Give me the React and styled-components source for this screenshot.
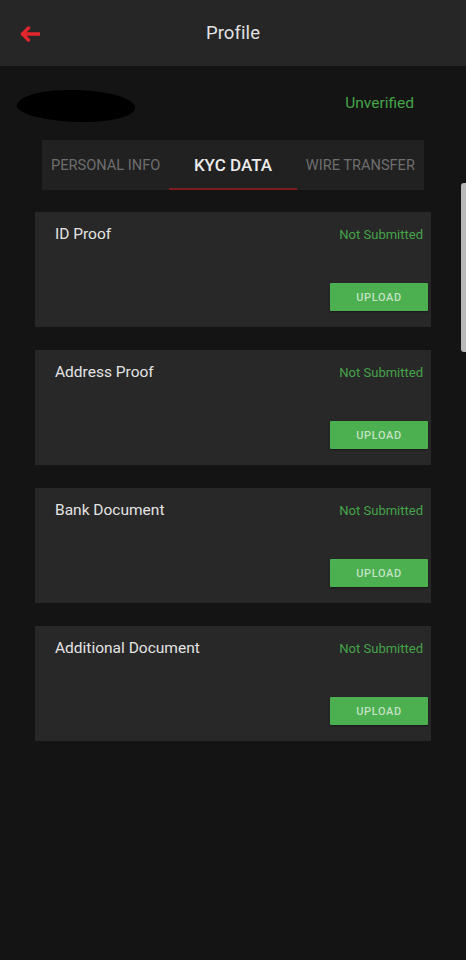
import React, { useState } from 'react';
import styled, { createGlobalStyle, css } from 'styled-components';

const GlobalStyle = createGlobalStyle`
  html, body {
    margin: 0;
    padding: 0;
    background: #141414;
    font-family: Roboto, "Liberation Sans", sans-serif;
  }
  * { box-sizing: border-box; }
`;

const Screen = styled.div`
  width: 466px;
  min-height: 960px;
  background: #141414;
  display: flex;
  flex-direction: column;
`;

const Header = styled.header`
  height: 66px;
  background: #262626;
  display: flex;
  align-items: center;
  padding: 0 20px;
`;

const BackButton = styled.button`
  background: none;
  border: 0;
  padding: 0;
  width: 20px;
  height: 16px;
  display: flex;
  align-items: center;
  cursor: pointer;
  margin-top: 1px;
`;

const Title = styled.h1`
  flex: 1;
  margin: 0 20px 0 0;
  text-align: center;
  color: #e2e2e2;
  font-size: 18.5px;
  font-weight: 400;
  letter-spacing: 0.1px;
`;

const UserRow = styled.div`
  height: 74px;
  display: flex;
  align-items: center;
  justify-content: space-between;
  padding: 0 52px 0 17px;
`;

const Redacted = styled.div`
  width: 118px;
  height: 32px;
  margin-top: 6px;
  background: #000;
  border-radius: 50% 45% 50% 50% / 55% 50% 50% 45%;
  transform: rotate(2deg);
`;

const Status = styled.span`
  color: #45a349;
  font-size: ${p => p.size || 15.5}px;
  ${p => p.offset && css`margin-right: ${p.offset}px;`}
`;

const Tabs = styled.nav`
  margin: 0 42px;
  height: 50px;
  background: #212121;
  display: flex;
`;

const Tab = styled.button`
  flex: 1;
  background: none;
  border: 0;
  padding: 2px 0 0;
  font-family: inherit;
  text-transform: uppercase;
  white-space: nowrap;
  display: flex;
  align-items: center;
  justify-content: center;
  border-bottom: 2px solid transparent;
  color: #6e6e6e;
  font-size: 14.6px;
  font-weight: 400;
  cursor: pointer;
  ${p => p.active && css`
    color: #ececec;
    font-size: 17px;
    font-weight: 500;
    border-bottom-color: #7c1b1b;
  `}
`;

const CardList = styled.div`
  display: flex;
  flex-direction: column;
  gap: 23px;
  padding: 22px 35px 0;
`;

const Card = styled.section`
  height: 115px;
  background: #282828;
  display: flex;
  flex-direction: column;
  justify-content: space-between;
  padding: 12px 3px 16px 20px;
`;

const CardTop = styled.div`
  display: flex;
  justify-content: space-between;
  align-items: baseline;
`;

const CardTitle = styled.h2`
  margin: 0;
  color: #e4e4e4;
  font-size: 15.5px;
  font-weight: 400;
  line-height: 20px;
`;

const UploadButton = styled.button`
  align-self: flex-end;
  width: 98px;
  height: 28px;
  border: 0;
  border-radius: 1px;
  background: #4caf50;
  color: rgba(230, 242, 230, 0.78);
  font-family: inherit;
  font-size: 11px;
  font-weight: 500;
  letter-spacing: 0.6px;
  box-shadow: 0 1px 2px rgba(0, 0, 0, 0.4);
  cursor: pointer;
`;

const ScrollThumb = styled.div`
  position: fixed;
  right: 0;
  top: 183px;
  width: 5px;
  height: 169px;
  background: #b8b8b8;
  border-radius: 3px 0 0 3px;
`;

const BackArrow = () => (
  <svg width="20" height="16" viewBox="0 0 20 16" fill="none">
    <path d="M2.5 8H19" stroke="#e3262d" strokeWidth="3.4" strokeLinecap="round" />
    <path d="M8.5 2L2.5 8l6 6" stroke="#e3262d" strokeWidth="3.4" strokeLinecap="round" strokeLinejoin="round" />
  </svg>
);

const tabs = ['Personal Info', 'KYC Data', 'Wire Transfer'];
const documents = ['ID Proof', 'Address Proof', 'Bank Document', 'Additional Document'];

export default function App() {
  const [active, setActive] = useState(1);

  return (
    <Screen>
      <GlobalStyle />
      <Header>
        <BackButton aria-label="Back">
          <BackArrow />
        </BackButton>
        <Title>Profile</Title>
      </Header>

      <UserRow>
        <Redacted />
        <Status>Unverified</Status>
      </UserRow>

      <Tabs>
        {tabs.map((t, i) => (
          <Tab key={t} active={i === active} onClick={() => setActive(i)}>
            {t}
          </Tab>
        ))}
      </Tabs>

      <CardList>
        {documents.map(d => (
          <Card key={d}>
            <CardTop>
              <CardTitle>{d}</CardTitle>
              <Status size={13} offset={5}>Not Submitted</Status>
            </CardTop>
            <UploadButton>UPLOAD</UploadButton>
          </Card>
        ))}
      </CardList>

      <ScrollThumb />
    </Screen>
  );
}
